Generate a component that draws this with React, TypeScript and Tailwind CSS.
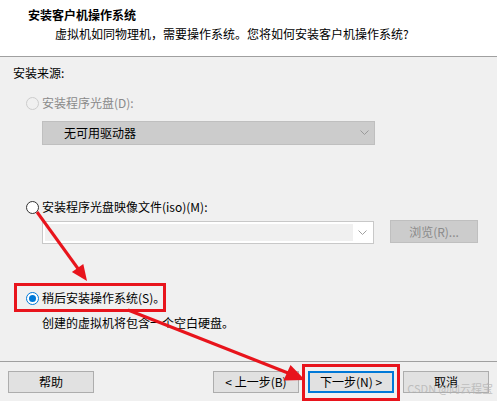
import React from "react";

const font = { fontFamily: '"Noto Sans CJK SC", "Noto Sans", sans-serif' };

function Radio({ state }: { state: "disabled" | "off" | "on" }) {
  if (state === "on") {
    return (
      <span className="flex h-[13px] w-[13px] items-center justify-center rounded-full border border-[#0078d7] bg-white">
        <span className="h-[7px] w-[7px] rounded-full bg-[#0078d7]" />
      </span>
    );
  }
  return (
    <span
      className={
        state === "disabled"
          ? "h-[13px] w-[13px] rounded-full border border-[#cccccc] bg-[#f0f0f0]"
          : "h-[13px] w-[13px] rounded-full border border-[#333333] bg-white"
      }
    />
  );
}

function Chevron({ color }: { color: string }) {
  return (
    <svg width="9" height="6" viewBox="0 0 9 6">
      <path d="M0.5 0.5 L4.5 4.5 L8.5 0.5" fill="none" stroke={color} strokeWidth="1" />
    </svg>
  );
}

function Btn({ children, primary }: { children: React.ReactNode; primary?: boolean }) {
  return (
    <button
      className={
        primary
          ? "flex h-[22px] w-[86px] items-center justify-center border-2 border-[#0078d7] bg-[#e1e1e1] text-[12px] text-black"
          : "flex h-[22px] w-[86px] items-center justify-center border border-[#adadad] bg-[#e1e1e1] text-[12px] text-black"
      }
    >
      {children}
    </button>
  );
}

export default function App() {
  return (
    <div className="relative flex h-[401px] w-[497px] flex-col overflow-hidden bg-[#f0f0f0] text-[12px] leading-[16px] text-black" style={font}>
      <div className="h-[57px] border-b border-[#a0a0a0] bg-white">
        <div className="pl-[28px] pt-[7px] font-bold">安装客户机操作系统</div>
        <div className="mt-[3px] pl-[55px]">虚拟机如同物理机，需要操作系统。您将如何安装客户机操作系统?</div>
      </div>

      <div className="flex flex-1 flex-col pl-[13px]">
        <div className="mt-[8px]">安装来源:</div>

        <div className="ml-[13px] mt-[14px] flex items-center gap-[3px] text-[#8a8a8a]">
          <Radio state="disabled" />
          <span>安装程序光盘(D):</span>
        </div>
        <div className="ml-[29px] mt-[10px] flex h-[24px] w-[333px] items-center justify-between border border-[#bfbfbf] bg-[#cccccc] pl-[21px] pr-[5px]">
          <span>无可用驱动器</span>
          <Chevron color="#9a9a9a" />
        </div>

        <div className="ml-[13px] mt-[54px] flex items-center gap-[3px]">
          <Radio state="off" />
          <span>安装程序光盘映像文件(iso)(M):</span>
        </div>
        <div className="mt-[6px] flex items-center">
          <div className="ml-[29px] flex h-[23px] w-[332px] items-center border border-[#c8c8c8] bg-white p-[2px]">
            <div className="h-full flex-1 bg-[#f0f0f0]" />
            <div className="flex w-[18px] justify-center">
              <Chevron color="#a0a0a0" />
            </div>
          </div>
          <div className="ml-[16px] flex h-[23px] w-[88px] -translate-y-[1px] items-center justify-center border border-[#bfbfbf] bg-[#cccccc] text-[#8a8a8a]">
            浏览(R)...
          </div>
        </div>

        <div className="ml-[13px] mt-[46px] flex items-center gap-[3px]">
          <Radio state="on" />
          <span>稍后安装操作系统(S)。</span>
        </div>
        <div className="ml-[29px] mt-[9px]">创建的虚拟机将包含一个空白硬盘。</div>
      </div>

      <div className="flex h-[40px] items-start border-t border-[#a0a0a0] px-[8px] pt-[9px]">
        <Btn>帮助</Btn>
        <div className="ml-auto flex gap-[9px]">
          <Btn>&lt; 上一步(B)</Btn>
          <Btn primary>下一步(N) &gt;</Btn>
          <Btn>取消</Btn>
        </div>
      </div>

      <div className="pointer-events-none absolute left-[14px] top-[283px] h-[29px] w-[152px] border-[3px] border-[#e8141c]" />
      <div className="pointer-events-none absolute left-[302px] top-[364px] h-[37px] w-[98px] border-[3px] border-[#e8141c]" />

      <svg className="pointer-events-none absolute left-0 top-0" width="497" height="401" viewBox="0 0 497 401">
        <line x1="37" y1="212" x2="79" y2="270" stroke="#e8141c" strokeWidth="3" />
        <polygon points="71.9,272.1 83.3,263.9 87,281" fill="#e8141c" />
        <line x1="128" y1="310" x2="288" y2="373" stroke="#e8141c" strokeWidth="3" />
        <polygon points="283.5,380.5 290.5,365 305,380" fill="#e8141c" />
      </svg>

      <div className="pointer-events-none absolute right-[4px] top-[380px] text-[11px] text-[#b4b4b4]/80">CSDN @向云程宝</div>
    </div>
  );
}
